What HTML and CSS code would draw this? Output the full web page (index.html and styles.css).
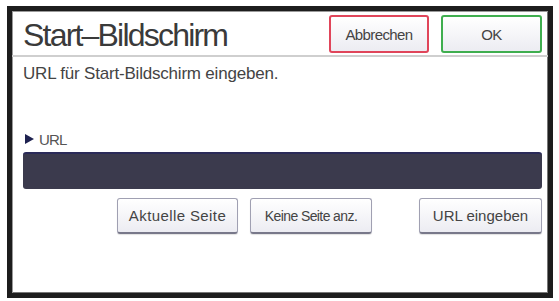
FILE: index.html
```html
<!DOCTYPE html>
<html lang="de">
<head>
  <meta charset="UTF-8">
  <title>Start-Bildschirm</title>
  <link rel="stylesheet" href="styles.css">
</head>
<body>
  <div class="screen">
    <div class="header">
      <h1>Start–Bildschirm</h1>
      <div class="actions">
        <button class="btn btn-cancel">Abbrechen</button>
        <button class="btn btn-ok">OK</button>
      </div>
    </div>

    <div class="content">
      <p class="hint">URL für Start-Bildschirm eingeben.</p>

      <div class="label"><span class="arrow"></span>URL</div>
      <div class="url-field"></div>

      <div class="row">
        <button class="btn btn-key btn-wide">Aktuelle Seite</button>
        <button class="btn btn-key btn-tight">Keine Seite anz.</button>
        <button class="btn btn-key btn-last">URL eingeben</button>
      </div>
    </div>
  </div>
</body>
</html>
```

FILE: styles.css
```css
body {
  margin: 0;
  background: #fff;
  font-family: "Liberation Sans", Arial, sans-serif;
  color: #333;
}

.screen {
  width: 536px;
  height: 282px;
  margin: 6px 0 0 7px;
  border: 5px solid #1d1d1d;
  box-shadow: inset 1px 1px 0 #9a9a9a, inset -1px -1px 0 #777;
  background: #fff;
  display: flex;
  flex-direction: column;
}

.header {
  height: 44px;
  border-bottom: 2px solid #cfcfcf;
  display: flex;
  align-items: flex-start;
  justify-content: space-between;
  padding: 0 6px 0 11px;
}

.header h1 {
  margin: 5px 0 0;
  font-size: 32px;
  font-weight: normal;
  line-height: 38px;
  letter-spacing: -1.8px;
  color: #3a3a3a;
}

.actions {
  display: flex;
  gap: 12px;
  margin-top: 4px;
}

.btn {
  font-family: "Liberation Sans", Arial, sans-serif;
  font-size: 15px;
  color: #444;
  background: linear-gradient(#ffffff, #ececf2);
  border: 1px solid #a0a0b2;
  border-radius: 3px;
  padding: 0;
  cursor: pointer;
}

.btn-cancel,
.btn-ok {
  width: 100px;
  height: 38px;
  border-width: 2px;
  letter-spacing: -0.6px;
}

.btn-cancel {
  border-color: #e0455a;
}

.btn-ok {
  width: 101px;
  border-color: #3fae4f;
}

.content {
  padding: 0 6px 0 11px;
}

.hint {
  margin: 7px 0 0;
  font-size: 17px;
  line-height: 20px;
  letter-spacing: -0.2px;
  color: #444;
}

.label {
  margin-top: 47px;
  height: 16px;
  display: flex;
  align-items: center;
  font-size: 15px;
  color: #555;
  letter-spacing: -0.8px;
}

.arrow {
  width: 0;
  height: 0;
  border-left: 9px solid #1e2250;
  border-top: 5px solid transparent;
  border-bottom: 5px solid transparent;
  margin: 0 5px 0 2px;
}

.url-field {
  margin-top: 5px;
  height: 35px;
  background: #3b3a4d;
  border-top: 2px solid #2a2a58;
  border-radius: 3px;
}

.row {
  margin-top: 9px;
  display: flex;
  justify-content: flex-end;
  gap: 12px;
}

.btn-key {
  height: 36px;
  width: 122px;
  border-bottom: 2px solid #78788a;
  box-shadow: 0 1px 1px rgba(0, 0, 0, 0.12);
}

.btn-wide {
  width: 121px;
  letter-spacing: 0.4px;
}

.btn-tight {
  font-size: 14px;
  letter-spacing: -0.6px;
}

.btn-last {
  width: 123px;
  margin-left: 35px;
}
```
